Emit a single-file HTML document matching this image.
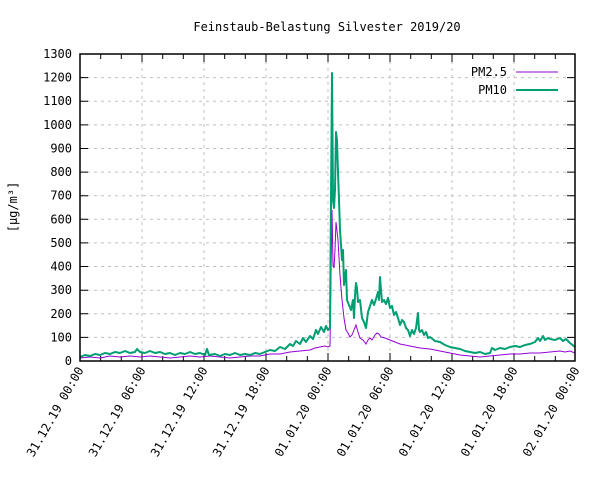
<!DOCTYPE html>
<html><head><style>body{margin:0;background:#fff}svg{display:block}text{font-family:"DejaVu Sans Mono","Liberation Mono",monospace;font-size:12px;fill:#000}</style></head><body>
<svg width="600" height="480" viewBox="0 0 600 480" xmlns="http://www.w3.org/2000/svg">
<rect width="600" height="480" fill="#fff"/>
<text x="327" y="31" text-anchor="middle">Feinstaub-Belastung Silvester 2019/20</text>
<g stroke="#c0c0c0" stroke-width="1" stroke-dasharray="3,4">
<path d="M80 337.4H575M80 313.8H575M80 290.2H575M80 266.5H575M80 242.9H575M80 219.3H575M80 195.7H575M80 172.1H575M80 148.5H575M80 124.9H575M80 101.2H575M80 77.6H575"/>
<path d="M142 54V361M204 54V361M266 54V361M328 54V361M390 54V361M452 54V361M514 54V361"/>
</g>
<g stroke="#000" stroke-width="1">
<path d="M80 361h8M80 337.4h8M80 313.8h8M80 290.2h8M80 266.5h8M80 242.9h8M80 219.3h8M80 195.7h8M80 172.1h8M80 148.5h8M80 124.9h8M80 101.2h8M80 77.6h8M575 337.4h-8M575 313.8h-8M575 290.2h-8M575 266.5h-8M575 242.9h-8M575 219.3h-8M575 195.7h-8M575 172.1h-8M575 148.5h-8M575 124.9h-8M575 101.2h-8M575 77.6h-8"/>
<path d="M100.7 361v-5M121.3 361v-5M142 361v-8M162.7 361v-5M183.3 361v-5M204 361v-8M224.7 361v-5M245.3 361v-5M266 361v-8M286.7 361v-5M307.3 361v-5M328 361v-8M348.7 361v-5M369.3 361v-5M390 361v-8M410.7 361v-5M431.3 361v-5M452 361v-8M472.7 361v-5M493.3 361v-5M514 361v-8M534.7 361v-5M555.3 361v-5"/>
<path d="M100.7 54v5M121.3 54v5M142 54v8M162.7 54v5M183.3 54v5M204 54v8M224.7 54v5M245.3 54v5M266 54v8M286.7 54v5M307.3 54v5M328 54v8M348.7 54v5M369.3 54v5M390 54v8M410.7 54v5M431.3 54v5M452 54v8M472.7 54v5M493.3 54v5M514 54v8M534.7 54v5M555.3 54v5"/>
</g>
<g text-anchor="end">
<text x="72" y="365">0</text><text x="72" y="341.4">100</text><text x="72" y="317.8">200</text><text x="72" y="294.2">300</text><text x="72" y="270.5">400</text><text x="72" y="246.9">500</text><text x="72" y="223.3">600</text><text x="72" y="199.7">700</text><text x="72" y="176.1">800</text><text x="72" y="152.5">900</text><text x="72" y="128.9">1000</text><text x="72" y="105.2">1100</text><text x="72" y="81.6">1200</text><text x="72" y="58">1300</text>
</g>
<text transform="translate(17,207) rotate(-90)" text-anchor="middle">[µg/m³]</text>
<g text-anchor="end">
<text transform="translate(84,370) rotate(-60)">31.12.19 00:00</text>
<text transform="translate(146,370) rotate(-60)">31.12.19 06:00</text>
<text transform="translate(208,370) rotate(-60)">31.12.19 12:00</text>
<text transform="translate(270,370) rotate(-60)">31.12.19 18:00</text>
<text transform="translate(332,370) rotate(-60)">01.01.20 00:00</text>
<text transform="translate(394,370) rotate(-60)">01.01.20 06:00</text>
<text transform="translate(456,370) rotate(-60)">01.01.20 12:00</text>
<text transform="translate(518,370) rotate(-60)">01.01.20 18:00</text>
<text transform="translate(580,370) rotate(-60)">02.01.20 00:00</text>
</g>
<polyline fill="none" stroke="#9400d3" stroke-width="1" points="80,358 90,357 100,358 110,356 120,357 130,356 140,357 150,356 160,357 170,358 180,357 190,356 200,357 210,356 220,357 230,358 240,357 250,356 260,356 270,354 280,354 290,352 300,351 310,350 315,348 320,347 325,346 328,347 330,346 332,210 333,265 334,268 335,250 336,222 338,240 340,275 342,300 344,318 346,330 348,333 350,337 352,335 354,330 356,325 358,332 360,338 363,340 366,344 368,340 370,338 372,340 375,335 377,333 379,334 381,337 385,338 390,340 395,342 400,344 410,346 420,348 430,349 440,351 450,353 460,355 470,356 480,357 490,356 500,355 510,354 520,354 530,353 540,353 550,352 560,351 565,352 570,351 575,353"/>
<polyline fill="none" stroke="#009e73" stroke-width="2" stroke-linejoin="round" points="80,357 85,355 90,356 95,354 100,355 105,353 110,354 115,352 120,353 125,351 130,353 135,352 137,349 140,352 145,353 150,351 155,353 160,352 165,354 170,353 175,355 180,353 185,354 190,352 195,354 200,353 205,355 207,349 209,355 215,354 220,356 225,354 230,355 235,353 240,355 245,354 250,355 255,353 260,354 265,352 270,350 275,351 280,347 285,349 290,344 293,346 296,341 300,344 303,338 306,342 310,336 313,339 316,330 318,334 321,327 324,332 326,326 328,330 330,328 332,73 333,200 334,208 335,190 336,132 337,140 338,172 339,200 340,230 342,260 343,250 344,285 346,270 347,300 349,305 351,310 353,300 354,318 355,296 356,283 357,288 358,302 360,300 362,318 364,322 366,328 368,312 370,306 372,300 374,305 376,299 378,292 379,300 380,277 381,290 382,302 384,300 386,304 388,298 390,308 392,306 394,315 396,312 398,318 400,325 402,320 404,322 406,328 408,330 410,336 412,330 414,334 416,328 418,313 419,330 420,332 422,330 424,335 426,332 428,338 430,337 435,341 440,342 445,345 450,347 455,348 460,349 465,351 470,352 475,353 480,352 485,354 490,353 492,348 495,350 500,348 505,349 510,347 515,346 520,347 525,345 530,344 535,342 538,338 540,341 543,336 545,340 548,338 550,339 555,340 560,338 563,341 566,339 570,343 575,347"/>
<rect x="80" y="54" width="495" height="307" fill="none" stroke="#000" stroke-width="1.5"/>
<text x="507" y="76" text-anchor="end">PM2.5</text>
<text x="507" y="94" text-anchor="end">PM10</text>
<path d="M516 72H558" stroke="#9400d3" stroke-width="1"/>
<path d="M516 90H558" stroke="#009e73" stroke-width="2"/>
</svg>
</body></html>
